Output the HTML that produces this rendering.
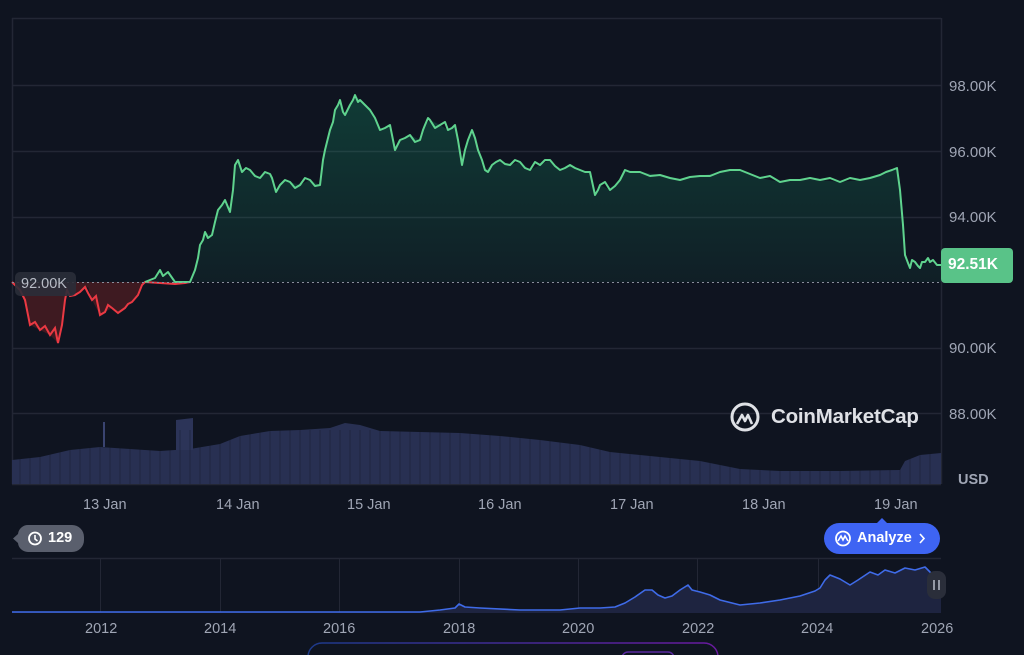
<!DOCTYPE html><html><head><style>
body{margin:0;width:1024px;height:655px;background:#0f1420;overflow:hidden;font-family:"Liberation Sans",sans-serif;position:relative}
.t{position:absolute;color:#a0a6b5;font-size:14.5px}
.ya{left:949px;font-size:15px}
</style></head><body>
<svg width="1024" height="655" style="position:absolute;left:0;top:0">
<defs>
<linearGradient id="gg" x1="0" y1="0" x2="0" y2="1"><stop offset="0" stop-color="#16c784" stop-opacity=".22"/><stop offset="1" stop-color="#16c784" stop-opacity=".06"/></linearGradient>
<linearGradient id="bl" x1="0" y1="0" x2="1" y2="0"><stop offset="0" stop-color="#1d3a8a"/><stop offset="1" stop-color="#6a1aa0"/></linearGradient>
</defs>
<g stroke="#232735" stroke-width="1.5">
<line x1="12" y1="18.5" x2="941" y2="18.5"/>
<line x1="12.5" y1="18" x2="12.5" y2="484"/>
<line x1="941.5" y1="18" x2="941.5" y2="484"/>
<line x1="12" y1="85.5" x2="941" y2="85.5"/>
<line x1="12" y1="151.5" x2="941" y2="151.5"/>
<line x1="12" y1="217.5" x2="941" y2="217.5"/>
<line x1="12" y1="348.5" x2="941" y2="348.5"/>
<line x1="12" y1="413.5" x2="941" y2="413.5"/>
<line x1="12" y1="484.5" x2="941" y2="484.5"/>
</g>
<polygon fill="#283052" points="12,484 12,460 40,457 70,450 100,447 130,449 160,451 190,449 220,444 240,436 270,431 300,430 330,428 345,423 360,425 380,431 420,432 460,433 500,436 540,440 580,445 610,452 650,456 700,461 740,469 780,471 840,471 900,470 905,461 920,455 941,453 941,484"/>
<polygon fill="#2c3458" points="176,450 176,420 193,418 193,450"/>
<line x1="104" y1="447" x2="104" y2="422" stroke="#3a4470" stroke-width="2"/>
<g stroke="#0f1420" stroke-width="1" opacity=".35">
<path d="M20 430V484M30 430V484M40 430V484M50 430V484M60 430V484M70 430V484M80 430V484M90 430V484M100 430V484M110 430V484M120 430V484M130 430V484M140 430V484M150 430V484M160 430V484M170 430V484M180 430V484M190 430V484M200 430V484M210 430V484M220 430V484M230 430V484M240 430V484M250 430V484M260 430V484M270 430V484M280 430V484M290 430V484M300 430V484M310 430V484M320 430V484M330 430V484M340 430V484M350 430V484M360 430V484M370 430V484M380 430V484M390 430V484M400 430V484M410 430V484M420 430V484M430 430V484M440 430V484M450 430V484M460 430V484M470 430V484M480 430V484M490 430V484M500 430V484M510 430V484M520 430V484M530 430V484M540 430V484M550 430V484M560 430V484M570 430V484M580 430V484M590 430V484M600 430V484M610 430V484M620 430V484M630 430V484M640 430V484M650 430V484M660 430V484M670 430V484M680 430V484M690 430V484M700 430V484M710 430V484M720 430V484M730 430V484M740 430V484M750 430V484M760 430V484M770 430V484M780 430V484M790 430V484M800 430V484M810 430V484M820 430V484M830 430V484M840 430V484M850 430V484M860 430V484M870 430V484M880 430V484M890 430V484M900 430V484M910 430V484M920 430V484M930 430V484"/>
</g>
<polygon fill="#4a1c22" opacity=".8" points="12,282 20,290 25,300 30,325 40,330 50,335 58,343 62,325 65,300 67,290 75,295 80,292 88,287 92,300 100,315 105,312 112,308 118,313 125,308 132,302 138,295 142,285 145,282"/>
<polyline fill="none" stroke="#ea3943" stroke-width="2" points="12,282 20,290 25,300 30,325 35,322 40,330 45,326 50,335 55,328 58,343 62,325 65,300 67,290 70,296 75,295 80,292 85,287 88,293 92,300 96,296 100,315 105,312 108,305 112,308 118,313 125,308 128,304 132,302 138,295 142,285 145,282 175,284 185,283 190,282"/>
<polygon fill="url(#gg)" points="145,282 150,280 155,278 160,270 163,276 168,272 175,282 190,282 195,270 200,245 205,232 212,235 218,210 225,200 230,212 235,165 238,160 242,172 250,170 260,178 265,172 272,178 276,192 280,185 285,180 290,182 300,185 310,180 320,185 325,150 330,130 335,110 340,100 345,115 350,105 355,95 360,100 370,110 380,130 390,125 395,150 400,140 410,135 420,140 425,125 430,120 440,125 448,130 455,125 462,165 468,140 472,130 478,150 485,170 492,165 500,160 510,165 520,162 530,170 540,165 550,160 560,170 570,165 580,170 590,172 595,195 600,185 610,190 620,180 625,170 640,172 660,175 680,180 700,176 720,172 740,170 760,178 780,182 800,180 820,180 840,182 860,180 880,175 892,170 897,168 900,190 905,255 910,268 915,262 920,268 925,262 930,262 937,265 941,265 941,282"/>
<polyline fill="none" stroke="#5fd38e" stroke-width="2" stroke-linejoin="round" points="145,282 150,280 155,278 160,270 163,276 168,272 175,282 190,282 195,270 198,258 200,245 203,240 205,232 208,238 212,235 215,222 218,210 222,205 225,200 230,212 233,190 235,165 238,160 242,172 246,168 250,170 255,176 260,178 265,172 270,174 272,178 276,192 280,185 285,180 290,182 295,188 300,185 305,178 310,180 315,186 320,185 323,160 325,150 328,138 330,130 333,122 335,110 338,105 340,100 343,112 345,115 350,105 353,100 355,95 358,102 360,100 365,105 370,110 375,118 380,130 385,128 390,125 395,150 398,144 400,140 405,138 410,135 415,142 420,140 423,130 425,125 428,118 430,120 435,128 440,125 445,122 448,130 452,128 455,125 458,140 462,165 465,150 468,140 472,130 475,138 478,150 482,160 485,170 488,172 492,165 496,162 500,160 505,164 510,165 515,160 520,162 525,168 530,170 535,162 540,165 545,160 550,160 555,166 560,170 565,168 570,165 575,168 580,170 585,172 590,172 595,195 598,190 600,185 605,182 610,190 615,186 620,180 625,170 630,172 640,172 650,176 660,175 670,178 680,180 690,177 700,176 710,176 720,172 730,170 740,170 750,174 760,178 770,176 780,182 790,180 800,180 810,178 820,180 830,178 840,182 850,178 860,180 870,178 880,175 886,172 892,170 897,168 900,190 903,225 905,255 908,263 910,268 912,260 915,262 918,266 920,268 922,262 925,262 928,258 930,262 933,260 937,265 941,265"/>
<line x1="12" y1="282.5" x2="941" y2="282.5" stroke="#8a8f9c" stroke-width="1" stroke-dasharray="2,3"/>
<line x1="12" y1="558.5" x2="941" y2="558.5" stroke="#232735" stroke-width="1.5"/>
<g stroke="#232735" stroke-width="1"><path d="M100.5 559V612M220.5 559V612M339.5 559V612M459.5 559V612M578.5 559V612M697.5 559V612M818.5 559V612"/></g>
<polygon fill="#1e2440" points="12,612 420,612 440,610 455,608 459,604 465,607 480,608 520,610 560,610 580,608 600,608 615,607 625,603 635,597 645,590 652,590 658,595 665,598 672,596 680,590 688,585 692,590 700,592 710,595 720,600 740,605 760,603 780,600 800,596 815,591 820,588 825,580 830,575 840,579 850,585 858,580 870,572 878,575 885,570 895,573 905,568 915,570 925,567 930,572 935,580 941,585 941,613 12,613"/>
<polyline fill="none" stroke="#3f6be8" stroke-width="1.6" stroke-linejoin="round" points="12,612 420,612 440,610 455,608 459,604 465,607 480,608 520,610 560,610 580,608 600,608 615,607 625,603 635,597 645,590 652,590 658,595 665,598 672,596 680,590 688,585 692,590 700,592 710,595 720,600 740,605 760,603 780,600 800,596 815,591 820,588 825,580 830,575 840,579 850,585 858,580 870,572 878,575 885,570 895,573 905,568 915,570 925,567 930,572 935,580"/>
<rect x="927" y="571" width="19" height="28" rx="8" fill="#2a2e3a"/>
<path d="M934 580v10M939 580v10" stroke="#b0b4c0" stroke-width="1.6"/>
<rect x="308" y="643" width="410" height="40" rx="14" fill="none" stroke="url(#bl)" stroke-width="1.5"/>
<rect x="622" y="652" width="52" height="20" rx="6" fill="none" stroke="#5a2aa0" stroke-width="1.5"/>
<path d="M28 525h44a12 12 0 0 1 12 12v3a12 12 0 0 1-12 12h-44a10 10 0 0 1-10-9l-5-4.5 5-4.5a10 10 0 0 1 10-9z" fill="#5a5f6d"/>
<circle cx="35" cy="538.5" r="6" fill="none" stroke="#fff" stroke-width="1.8"/>
<path d="M35 535v4l2.5 2" fill="none" stroke="#fff" stroke-width="1.6"/>
<rect x="824" y="523" width="116" height="31" rx="15.5" fill="#3e64f3"/>
<path d="M877 523l5-5 5 5z" fill="#3e64f3"/>
<circle cx="843" cy="538.5" r="7" fill="none" stroke="#fff" stroke-width="1.8"/>
<path d="M838 541l3-5 2 4 2-4 3 5" fill="none" stroke="#fff" stroke-width="1.6"/>
<path d="M920 534l4 4.5-4 4.5" fill="none" stroke="#fff" stroke-width="1.6"/>
<circle cx="745" cy="417" r="13" fill="none" stroke="#dfe1e6" stroke-width="3"/>
<path d="M737 424l5-9 3 6 3-6 4 9" fill="none" stroke="#dfe1e6" stroke-width="2.6" stroke-linejoin="round"/>
<rect x="941" y="248" width="72" height="35" rx="4" fill="#59c388"/>
<rect x="15" y="272" width="61" height="24" rx="5" fill="#2a2e38" opacity=".9"/>
</svg>
<div class="t" style="left:21px;top:276px;color:#b8bcc6;font-size:14.5px">92.00K</div>
<div class="t" style="left:948px;top:256px;color:#fff;font-size:15.5px;font-weight:bold">92.51K</div>
<div class="t ya" style="top:78px">98.00K</div>
<div class="t ya" style="top:144px">96.00K</div>
<div class="t ya" style="top:209px">94.00K</div>
<div class="t ya" style="top:340px">90.00K</div>
<div class="t ya" style="top:406px">88.00K</div>
<div class="t" style="left:958px;top:472px;font-weight:bold;font-size:14.5px">USD</div>
<div class="t" style="left:771px;top:405px;color:#dfe1e6;font-size:20.5px;font-weight:bold;letter-spacing:-0.2px">CoinMarketCap</div>
<div class="t" style="left:83px;top:497px">13 Jan</div>
<div class="t" style="left:216px;top:497px">14 Jan</div>
<div class="t" style="left:347px;top:497px">15 Jan</div>
<div class="t" style="left:478px;top:497px">16 Jan</div>
<div class="t" style="left:610px;top:497px">17 Jan</div>
<div class="t" style="left:742px;top:497px">18 Jan</div>
<div class="t" style="left:874px;top:497px">19 Jan</div>
<div class="t" style="left:48px;top:530px;color:#fff;font-weight:bold;font-size:14.5px">129</div>
<div class="t" style="left:857px;top:530px;color:#fff;font-weight:bold;font-size:14.5px">Analyze</div>
<div class="t" style="left:85px;top:621px">2012</div>
<div class="t" style="left:204px;top:621px">2014</div>
<div class="t" style="left:323px;top:621px">2016</div>
<div class="t" style="left:443px;top:621px">2018</div>
<div class="t" style="left:562px;top:621px">2020</div>
<div class="t" style="left:682px;top:621px">2022</div>
<div class="t" style="left:801px;top:621px">2024</div>
<div class="t" style="left:921px;top:621px">2026</div>
</body></html>
